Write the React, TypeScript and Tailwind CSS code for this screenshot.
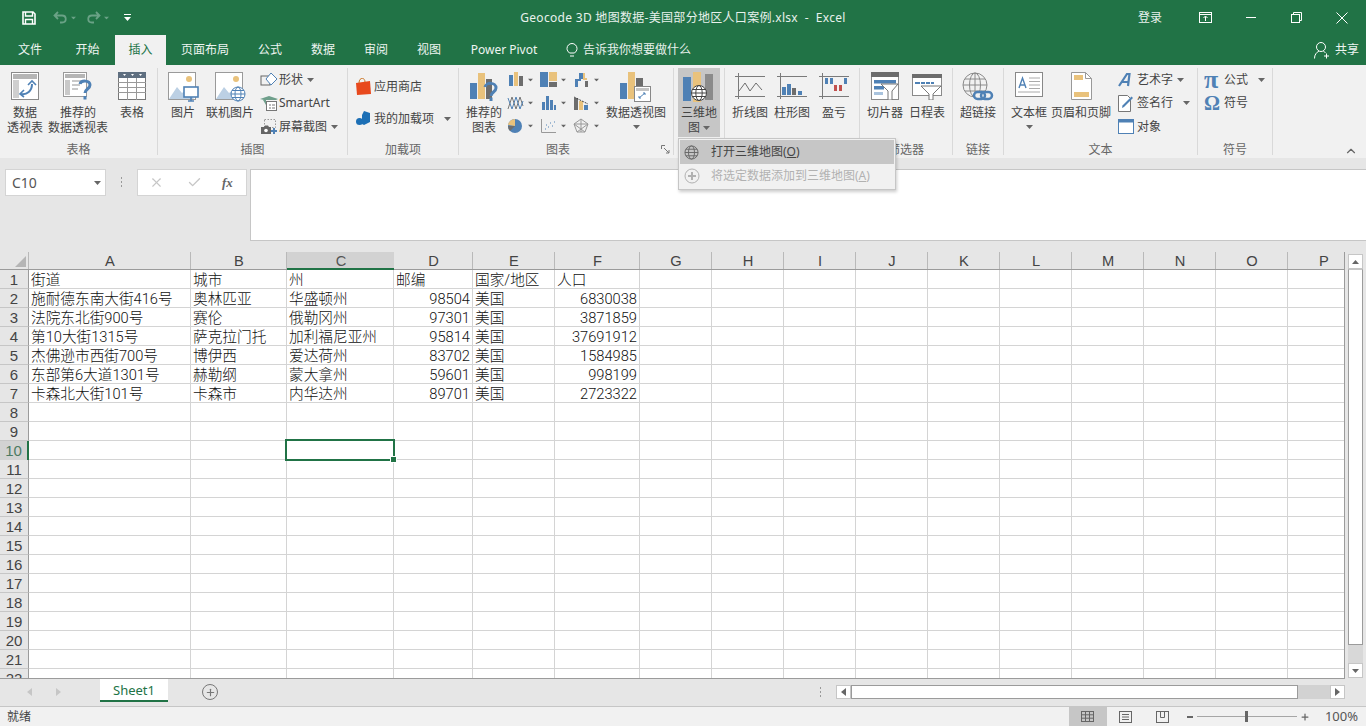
import React from 'react';
import { X, Check, Plus, ChevronUp } from 'lucide-react';

const BLUE = '#4f81b5';
const TAN = '#e9c27c';
const GRAY = '#6d6d6d';

const Caret = ({ className = '', color = '#666' }: { className?: string; color?: string }) => (
  <svg width="7" height="4" viewBox="0 0 7 4" className={className}>
    <path d="M0 0h7L3.5 4z" fill={color} />
  </svg>
);

const Globe = ({ size = 16, color = '#777', sw = 1 }: { size?: number; color?: string; sw?: number }) => (
  <svg width={size} height={size} viewBox="0 0 16 16" fill="none" stroke={color} strokeWidth={sw}>
    <circle cx="8" cy="8" r="7" />
    <ellipse cx="8" cy="8" rx="3.2" ry="7" />
    <path d="M1 8h14M2 4.5h12M2 11.5h12" />
  </svg>
);

const PivotIcon = () => (
  <svg width="28" height="28" viewBox="0 0 28 28" fill="none">
    <rect x=".5" y=".5" width="27" height="27" fill="#fff" stroke="#8a8a8a" />
    <rect x="2" y="2" width="24" height="5" fill="#b5b5b5" />
    <rect x="2" y="8" width="6" height="18" fill="#cfcfcf" />
    <path d="M10 22c6 1 11-3 11-10" stroke={BLUE} strokeWidth="2" />
    <path d="M17 13l4-4 4 4M13 18l-4 4 4 3" stroke={BLUE} strokeWidth="1.6" />
  </svg>
);

const RecPivotIcon = () => (
  <svg width="30" height="30" viewBox="0 0 30 30" fill="none">
    <rect x=".5" y=".5" width="23" height="24" fill="#fff" stroke="#9a9a9a" />
    <rect x="2" y="2" width="20" height="4" fill="#b5b5b5" />
    <path d="M2 8h5v15H2zM9 8h12v2H9zM9 12h8v2H9zM9 16h6v2H9z" fill="#c9c9c9" />
    <path d="M17 12c1-4 10-4 10 1 0 4-5 4-5 8" stroke={BLUE} strokeWidth="3" />
    <rect x="20.5" y="24" width="3" height="3.5" fill={BLUE} />
  </svg>
);

const TableIcon = () => (
  <svg width="28" height="28" viewBox="0 0 28 28" fill="none">
    <rect x=".5" y=".5" width="27" height="27" fill="#fff" stroke="#777" />
    <rect x="0" y="0" width="28" height="6" fill="#5f6f80" />
    <path d="M5 2h3L6.5 4zM13 2h3l-1.5 2zM21 2h3l-1.5 2z" fill="#fff" />
    <path d="M0 10.5h28M0 15.5h28M0 20.5h28M9.5 6v22M18.5 6v22" stroke="#999" />
  </svg>
);

const PictureBase = () => (
  <>
    <rect x=".5" y=".5" width="27" height="27" fill="#fff" stroke="#9a9a9a" />
    <circle cx="21" cy="7" r="3" fill={TAN} />
    <path d="M1 27l8-12 5 6 4-3 8 9z" fill="#bcd0e4" />
  </>
);

const PictureIcon = () => (
  <svg width="31" height="30" viewBox="0 0 31 30" fill="none">
    <PictureBase />
    <rect x="16" y="15" width="14" height="10" fill="#fff" stroke={BLUE} strokeWidth="1.6" />
    <path d="M20 29h6M23 25v4" stroke={BLUE} strokeWidth="1.6" />
  </svg>
);

const OnlinePictureIcon = () => (
  <svg width="31" height="30" viewBox="0 0 31 30" fill="none">
    <PictureBase />
    <circle cx="23" cy="22" r="7" fill="#fff" stroke={BLUE} />
    <ellipse cx="23" cy="22" rx="3" ry="7" stroke={BLUE} />
    <path d="M16 22h14M17 18.5h12M17 25.5h12" stroke={BLUE} />
  </svg>
);

const ShapesIcon = () => (
  <svg width="18" height="16" viewBox="0 0 18 16" fill="none">
    <rect x="1" y="4" width="9" height="9" stroke="#666" />
    <path d="M11 1l6 6-6 6-5-6z" fill="#fff" stroke={BLUE} />
  </svg>
);

const SmartArtIcon = () => (
  <svg width="18" height="17" viewBox="0 0 18 17" fill="none">
    <path d="M0 4l9-3 9 3-2 1H4z" fill="#6f9f8b" />
    <path d="M3 5l3 5V5z" fill="#6f9f8b" />
    <rect x="6.5" y="6.5" width="10" height="9" fill="#fff" stroke="#777" />
    <path d="M9 10h2M9 13h2M12 10h3M12 13h3" stroke="#777" />
  </svg>
);

const ScreenshotIcon = () => (
  <svg width="18" height="16" viewBox="0 0 18 16" fill="none">
    <rect x="4.5" y=".5" width="11" height="8" stroke="#999" strokeDasharray="1.5 1.5" />
    <path d="M1 8h3l1-1.5h3L9 8h2v7H1z" fill="#666" />
    <circle cx="6" cy="11.5" r="1.8" fill="#fff" />
    <path d="M14 9v6M11 12h6" stroke={BLUE} strokeWidth="2" />
  </svg>
);

const StoreIcon = () => (
  <svg width="15" height="17" viewBox="0 0 15 17">
    <path d="M0 5l14-2 1 13-14 1z" fill="#e8491d" />
    <path d="M3 5c0-6 6-6 6-1" stroke="#c9701d" fill="none" />
  </svg>
);

const AddinIcon = () => (
  <svg width="15" height="15" viewBox="0 0 15 15" fill="#1c6fb5">
    <circle cx="3.5" cy="10.5" r="3.5" />
    <path d="M8 0l6 2v9l-6 3-2-1V4z" />
  </svg>
);

const bar = (x: number, h: number, w: number, fill: string, base = 15) => (
  <rect key={`${x}-${h}`} x={x} y={base - h} width={w} height={h} fill={fill} />
);

const Mini = ({ children }: { children: React.ReactNode }) => (
  <svg width="17" height="16" viewBox="0 0 17 16" fill="none">
    {children}
  </svg>
);

const RecChartIcon = () => (
  <svg width="30" height="30" viewBox="0 0 30 30" fill="none">
    {bar(1, 16, 7, BLUE, 27)}
    {bar(9, 26, 7, TAN, 27)}
    {bar(17, 20, 6, GRAY, 27)}
    <path d="M16 15c1-5 11-5 11 1 0 4-5 4-5 8" stroke={BLUE} strokeWidth="3" />
    <rect x="20.5" y="25.5" width="3" height="3.5" fill={BLUE} />
  </svg>
);

const PivotChartIcon = () => (
  <svg width="33" height="30" viewBox="0 0 33 30" fill="none">
    {bar(0, 16, 7, BLUE, 27)}
    {bar(8, 27, 7, TAN, 27)}
    {bar(16, 21, 7, GRAY, 27)}
    <rect x="14.5" y="14.5" width="16" height="15" fill="#fff" stroke="#888" />
    <rect x="16" y="16" width="13" height="3" fill="#c4c4c4" />
    <path d="M19 26l6-5M23 21h2v2M21 26h-2v-2" stroke={BLUE} />
  </svg>
);

const Map3DIcon = () => (
  <svg width="32" height="31" viewBox="0 0 32 31" fill="none">
    {bar(0, 24, 8, BLUE, 29)}
    {bar(10, 30, 8, TAN, 30)}
    {bar(22, 26, 8, '#8b8b8b', 28)}
    <circle cx="16" cy="21" r="7.5" fill="#fff" stroke="#444" />
    <ellipse cx="16" cy="21" rx="3.2" ry="7.5" stroke="#444" />
    <path d="M8.5 21h15M10 17.5h12M10 24.5h12" stroke="#444" />
  </svg>
);

const SparkFrame = ({ children }: { children: React.ReactNode }) => (
  <svg width="30" height="28" viewBox="0 0 30 28" fill="none">
    <path d="M0 4.5h30M0 24.5h30M3.5 1v26" stroke="#7a7a7a" />
    {children}
  </svg>
);

const SlicerIcon = () => (
  <svg width="28" height="28" viewBox="0 0 28 28" fill="none">
    <rect x=".5" y=".5" width="27" height="27" fill="#fff" stroke="#8a8a8a" />
    <rect x="0" y="0" width="28" height="5" fill={GRAY} />
    <rect x="3" y="8" width="22" height="3.5" fill={BLUE} />
    <rect x="3" y="14" width="10" height="3.5" fill={BLUE} />
    <rect x="3" y="20" width="9" height="3" fill="#a9c3dd" />
    <path d="M10 12h17l-6 7v9h-4v-9z" fill="#fff" stroke="#777" />
  </svg>
);

const TimelineIcon = () => (
  <svg width="30" height="28" viewBox="0 0 30 28" fill="none">
    <rect x=".5" y="2.5" width="29" height="21" fill="#fff" stroke="#8a8a8a" />
    <rect x="0" y="2" width="30" height="4" fill={GRAY} />
    <path d="M3 11h5M9 11h4M14 11h4M19 11h3" stroke={BLUE} strokeWidth="2" />
    <path d="M9 14h20l-8 8v6h-4v-6z" fill="#fff" stroke="#777" />
  </svg>
);

const LinkIcon = () => (
  <svg width="32" height="32" viewBox="0 0 32 32" fill="none">
    <circle cx="13" cy="13" r="12" stroke="#8a8a8a" />
    <ellipse cx="13" cy="13" rx="5.5" ry="12" stroke="#8a8a8a" />
    <path d="M1 13h24M3 7h20M3 19h20M13 1v24" stroke="#8a8a8a" />
    <rect x="12" y="20" width="11" height="7" rx="3.5" stroke={BLUE} strokeWidth="2.5" fill="#f1f1f1" />
    <rect x="19" y="20" width="11" height="7" rx="3.5" stroke={BLUE} strokeWidth="2.5" />
  </svg>
);

const TextBoxIcon = () => (
  <svg width="28" height="26" viewBox="0 0 28 26" fill="none">
    <rect x=".5" y=".5" width="27" height="24" fill="#fff" stroke="#888" />
    <path d="M4 16l3.5-10L11 16M5 13h5" stroke={BLUE} strokeWidth="1.4" />
    <path d="M14 6h11M14 9.5h11M14 13h11M14 16.5h11M3 20h22" stroke="#aaa" />
  </svg>
);

const HeaderFooterIcon = () => (
  <svg width="21" height="28" viewBox="0 0 21 28" fill="none">
    <path d="M.5.5h14l6 6v21H.5z" fill="#fff" stroke="#999" />
    <path d="M14.5.5v6h6" stroke="#999" />
    <rect x="3" y="3" width="9" height="5" fill={TAN} />
    <rect x="3" y="20" width="15" height="5" fill={TAN} />
  </svg>
);

const WordArtIcon = () => (
  <svg width="14" height="14" viewBox="0 0 14 14" fill="none">
    <path d="M1 13L9 1h2.5L10 13M4 9h7" stroke={BLUE} strokeWidth="2.2" />
  </svg>
);

const SignatureIcon = () => (
  <svg width="16" height="17" viewBox="0 0 16 17" fill="none">
    <path d="M.5.5h9l3 3v13H.5z" fill="#fff" stroke="#777" />
    <path d="M4 13l2-1 9-9-1.5-1.5-9 9z" fill={BLUE} />
  </svg>
);

const ObjectIcon = () => (
  <svg width="16" height="15" viewBox="0 0 16 15" fill="none">
    <rect x=".5" y=".5" width="15" height="14" fill="#fff" stroke={BLUE} />
    <rect x="0" y="0" width="16" height="3.5" fill={BLUE} />
  </svg>
);

const SaveIcon = () => (
  <svg width="14" height="14" viewBox="0 0 14 14" fill="none">
    <path d="M1 1h10l2 2v10H1z" stroke="#fff" strokeWidth="1.6" />
    <path d="M3.5 1v4h7V1M3.5 13V8.5h7V13" stroke="#fff" strokeWidth="1.4" />
  </svg>
);

const UndoIcon = ({ flip = false }: { flip?: boolean }) => (
  <svg width="15" height="13" viewBox="0 0 15 13" fill="none" className={flip ? '-scale-x-100' : ''}>
    <path d="M5 1L1.5 4.5 5 8M2 4.5h7c5 0 5 7 0 7H7" stroke="#6aa286" strokeWidth="1.8" />
  </svg>
);

const Big = ({ w, ml = 0, icon, lines, caret, iconH = 'h-[32px]' }: { w: number; ml?: number; icon: React.ReactNode; lines: string[]; caret?: boolean; iconH?: string }) => (
  <div style={{ width: w, marginLeft: ml }} className="flex flex-col items-center shrink-0 pt-[4px] text-[12px] leading-[15px] text-[#444]">
    <div className={`${iconH} flex items-start justify-center`}>{icon}</div>
    <div className="mt-[1px] whitespace-nowrap">{lines[0]}</div>
    {lines[1] && <div className="whitespace-nowrap">{lines[1]}</div>}
    {caret && <Caret className="mt-[5px]" />}
  </div>
);

const Small = ({ icon, label, caret, iconW = 19, caretGap = 4 }: { icon: React.ReactNode; label: string; caret?: boolean; iconW?: number; caretGap?: number }) => (
  <div className="flex items-center h-[23.5px] text-[12px] text-[#444] whitespace-nowrap">
    <div style={{ width: iconW }} className="flex items-center shrink-0">{icon}</div>
    <span>{label}</span>
    {caret && <span style={{ marginLeft: caretGap }}><Caret className="block" /></span>}
  </div>
);

const Group = ({ w, label, labelClass = '', children }: { w: number; label?: string; labelClass?: string; children: React.ReactNode }) => (
  <div style={{ width: w }} className="h-[87px] shrink-0 flex flex-col border-r border-[#d9d9d9]">
    <div className="h-[73px] flex">{children}</div>
    <div className={`h-[14px] leading-[18px] text-center text-[12px] text-[#666] ${labelClass}`}>{label}</div>
  </div>
);

const ChartCell = ({ children }: { children: React.ReactNode }) => (
  <div className="flex items-center justify-start gap-[3px] h-[23px]">
    <Mini>{children}</Mini>
    <Caret className="scale-75" />
  </div>
);

const tabs: [string, number][] = [
  ['文件', 60],
  ['开始', 55],
  ['插入', 51],
  ['页面布局', 78],
  ['公式', 52],
  ['数据', 54],
  ['审阅', 52],
  ['视图', 54],
  ['Power Pivot', 96],
];

const cols = ['A', 'B', 'C', 'D', 'E', 'F', 'G', 'H', 'I', 'J', 'K', 'L', 'M', 'N', 'O', 'P'];
const colW = [162, 96, 107, 79, 82, 85, 72, 72, 72, 72, 72, 72, 72, 72, 72, 72];

const rows = [
  ['街道', '城市', '州', '邮编', '国家/地区', '人口'],
  ['施耐德东南大街416号', '奥林匹亚', '华盛顿州', '98504', '美国', '6830038'],
  ['法院东北街900号', '赛伦', '俄勒冈州', '97301', '美国', '3871859'],
  ['第10大街1315号', '萨克拉门托', '加利福尼亚州', '95814', '美国', '37691912'],
  ['杰佛逊市西街700号', '博伊西', '爱达荷州', '83702', '美国', '1584985'],
  ['东部第6大道1301号', '赫勒纲', '蒙大拿州', '59601', '美国', '998199'],
  ['卡森北大街101号', '卡森市', '内华达州', '89701', '美国', '2723322'],
];

const ScrollBtn = ({ children }: { children: React.ReactNode }) => (
  <div className="bg-white border border-[#c6c6c6] flex items-center justify-center shrink-0">{children}</div>
);

export default function App() {
  const rowNums = Array.from({ length: 22 }, (_, i) => i + 1);
  return (
    <div className="w-[1366px] h-[726px] overflow-hidden bg-[#e6e6e6] font-['Noto_Sans','Noto_Sans_CJK_SC',sans-serif] text-[12px]">
      {/* title bar */}
      <div className="h-[35px] bg-[#217346] flex items-center text-white relative">
        <div className="flex items-center w-[140px] shrink-0">
          <div className="ml-[22px] w-[14px]"><SaveIcon /></div>
          <div className="ml-[17px]"><UndoIcon /></div>
          <Caret className="ml-[2px] scale-75" color="#6aa286" />
          <div className="ml-[9px]"><UndoIcon flip /></div>
          <Caret className="ml-[2px] scale-75" color="#6aa286" />
          <svg width="7" height="7" viewBox="0 0 7 7" className="ml-[14px]"><path d="M0 0h7v1H0zM0 3h7L3.5 7z" fill="#fff" /></svg>
        </div>
        <div className="w-[997px] text-center text-[#e8f1ec] tracking-[0.3px] ml-[-1px] pl-[91px] whitespace-pre">Geocode 3D 地图数据-美国部分地区人口案例.xlsx  -  Excel</div>
        <div className="w-[40px] text-center text-[#e8f1ec] ml-[-6px]">登录</div>
        <div className="flex items-center">
          <svg width="13" height="11" viewBox="0 0 13 11" fill="none" stroke="#fff" className="ml-[29px]"><rect x=".5" y=".5" width="12" height="10" /><path d="M.5 2.5h12M6.5 9V4.5M4.5 6l2-2 2 2" /></svg>
          <svg width="12" height="11" viewBox="0 0 12 11" fill="none" stroke="#fff" className="ml-[33px]"><path d="M1 5.5h10" /></svg>
          <svg width="11" height="11" viewBox="0 0 11 11" fill="none" stroke="#fff" className="ml-[34px]"><rect x=".5" y="2.5" width="8" height="8" /><path d="M2.5 2.5v-2h8v8h-2" /></svg>
          <svg width="12" height="12" viewBox="0 0 12 12" fill="none" stroke="#fff" className="ml-[34px]"><path d="M.5.5l11 11M11.5.5l-11 11" /></svg>
        </div>
      </div>
      {/* tabs */}
      <div className="h-[30px] bg-[#217346] flex text-white">
        {tabs.map(([name, w]) => (
          <div key={name} style={{ width: w }} className={name === '插入' ? 'h-[30px] bg-[#f1f1f1] text-[#217346] flex items-center justify-center' : 'h-[30px] flex items-center justify-center text-[#eef5f1]'}>
            {name}
          </div>
        ))}
        <div className="flex items-center ml-[14px] text-[#e8f1ec]">
          <svg width="12" height="15" viewBox="0 0 12 15" fill="none" stroke="#fff" className="mr-[5px]"><path d="M3.5 10C2 8.5 1 7.5 1 5.5a5 5 0 0 1 10 0c0 2-1 3-2.5 4.5zM4 13h4" /></svg>
          告诉我你想要做什么
        </div>
        <div className="ml-auto flex items-center text-[#eef5f1] mr-[7px]">
          <svg width="15" height="17" viewBox="0 0 15 17" fill="none" stroke="#fff" className="mr-[6px]"><circle cx="7" cy="5" r="4.5" /><path d="M.5 16.5c0-4 2-6 4.5-7.5M9.5 9.5l2 1M10 14h5M12.5 11.5v5" /></svg>
          共享
        </div>
      </div>
      {/* ribbon */}
      <div className="h-[93px] bg-[#f1f1f1] pt-[3px] flex relative">
        <Group w={158} label="表格">
          <Big w={42} ml={4} icon={<PivotIcon />} lines={['数据', '透视表']} />
          <Big w={60} ml={2} icon={<RecPivotIcon />} lines={['推荐的', '数据透视表']} />
          <Big w={34} ml={7} icon={<TableIcon />} lines={['表格']} />
        </Group>
        <Group w={190} label="插图">
          <Big w={36} ml={7} icon={<PictureIcon />} lines={['图片']} />
          <Big w={48} ml={5} icon={<OnlinePictureIcon />} lines={['联机图片']} />
          <div className="ml-[6px]">
            <Small icon={<ShapesIcon />} label="形状" caret />
            <Small icon={<SmartArtIcon />} label="SmartArt" />
            <Small icon={<ScreenshotIcon />} label="屏幕截图" caret />
          </div>
        </Group>
        <Group w={111} label="加载项">
          <div className="ml-[8px] pt-[7px]">
            <div className="h-[24px]"><Small iconW={18} icon={<StoreIcon />} label="应用商店" /></div>
            <div className="h-[24px] mt-[8px]"><Small iconW={18} icon={<AddinIcon />} label="我的加载项" caret caretGap={10} /></div>
          </div>
        </Group>
        <div className="relative">
          <Group w={215} label="图表" labelClass="pr-[16px]">
            <Big w={38} ml={6} icon={<RecChartIcon />} lines={['推荐的', '图表']} />
            <div className="ml-[4px] grid grid-cols-[33px_33px_33px] content-start">
              <ChartCell>{bar(2, 11, 4, BLUE, 14)}{bar(7, 14, 4, TAN, 14)}{bar(12, 10, 4, GRAY, 14)}</ChartCell>
              <ChartCell><rect x="0" y="0" width="8" height="15" fill={BLUE} /><rect x="9" y="0" width="8" height="9" fill={TAN} /><rect x="9" y="10" width="8" height="5" fill={GRAY} /></ChartCell>
              <ChartCell><path d="M2 15V7h4V1h4v6H8v2H5v6z" fill={BLUE} /><path d="M10 1h2v5h2v2h-4z" fill={TAN} /><rect x="12" y="9" width="3" height="6" fill={GRAY} /></ChartCell>
              <ChartCell><path d="M1 14L5 2l4 12 4-12 3 9" stroke="#777" /><path d="M1 3l4 11 4-12 4 12 3-8" stroke={BLUE} /></ChartCell>
              <ChartCell>{bar(2, 8, 3, BLUE)}{bar(6, 14, 3, BLUE)}{bar(10, 10, 3, BLUE)}{bar(14, 5, 2, BLUE)}</ChartCell>
              <ChartCell>{bar(1, 12, 4, GRAY)}{bar(6, 9, 4, TAN)}{bar(11, 5, 4, BLUE)}<path d="M1 2l14 7" stroke="#444" strokeDasharray="2 1" /></ChartCell>
              <ChartCell><circle cx="8" cy="8" r="7" fill={BLUE} /><path d="M8 8V1a7 7 0 0 0-7 6z" fill={TAN} /><path d="M8 8H1a7 7 0 0 0 2 5z" fill={GRAY} /></ChartCell>
              <ChartCell><path d="M1.5 1v13.5H16" stroke="#999" /><path d="M5 11h1M8 9h1M10 5h1M12 8h1M14 4h1M6 7h1" stroke={BLUE} /></ChartCell>
              <ChartCell><path d="M8 1l7 5-3 8H4L1 6zM8 1v13M1 6l14 0M4 14l11-8M12 14L1 6" stroke="#999" /></ChartCell>
            </div>
            <Big w={60} icon={<PivotChartIcon />} lines={['数据透视图']} caret />
          </Group>
          <svg width="9" height="9" viewBox="0 0 9 9" fill="none" stroke="#777" className="absolute left-[202px] top-[77px]"><path d="M.5 4V.5H4M3 3l5 5M8 5v3H5" /></svg>
        </div>
        <Group w={51}>
          <div className="ml-[4px] w-[42px] h-[69px] bg-[#c6c6c6] flex flex-col items-center pt-[4px] text-[12px] leading-[15px] text-[#444]">
            <div className="h-[32px]"><Map3DIcon /></div>
            <div className="mt-[1px]">三维地</div>
            <div className="flex items-center gap-[3px]">图<Caret /></div>
          </div>
        </Group>
        <Group w={135}>
          <Big w={42} ml={4} icon={<SparkFrame><path d="M4 19l6-8 5 8 6-8 6 7" stroke="#6d6d6d" /></SparkFrame>} lines={['折线图']} />
          <Big w={42} icon={<SparkFrame>{bar(5, 8, 4, BLUE, 23)}{bar(10, 11, 4, BLUE, 23)}{bar(15, 7, 4, GRAY, 23)}{bar(21, 4, 4, BLUE, 23)}</SparkFrame>} lines={['柱形图']} />
          <Big w={42} icon={<SparkFrame><rect x="6" y="6" width="3" height="6" fill={BLUE} /><rect x="11" y="6" width="3" height="6" fill={BLUE} /><rect x="15" y="13" width="3" height="6" fill="#c0504d" /><rect x="20" y="13" width="3" height="6" fill="#c0504d" /><rect x="25" y="6" width="3" height="6" fill={BLUE} /></SparkFrame>} lines={['盈亏']} />
        </Group>
        <Group w={93} label="筛选器">
          <Big w={42} ml={4} icon={<SlicerIcon />} lines={['切片器']} />
          <Big w={42} icon={<TimelineIcon />} lines={['日程表']} />
        </Group>
        <Group w={51} label="链接">
          <Big w={42} ml={4} icon={<LinkIcon />} lines={['超链接']} />
        </Group>
        <Group w={194} label="文本">
          <Big w={42} ml={4} icon={<TextBoxIcon />} lines={['文本框']} caret />
          <Big w={60} ml={1} icon={<HeaderFooterIcon />} lines={['页眉和页脚']} />
          <div className="ml-[7px]">
            <Small iconW={19} icon={<WordArtIcon />} label="艺术字" caret />
            <Small iconW={19} icon={<SignatureIcon />} label="签名行" caret caretGap={10} />
            <Small iconW={19} icon={<ObjectIcon />} label="对象" />
          </div>
        </Group>
        <Group w={75} label="符号">
          <div className="ml-[6px]">
            <Small iconW={20} icon={<span className="font-['Liberation_Serif',serif] text-[26px] font-bold leading-[20px] text-[#4f81b5]">π</span>} label="公式" caret caretGap={10} />
            <Small iconW={20} icon={<span className="font-['Liberation_Serif',serif] text-[20px] font-bold leading-[20px] text-[#4f81b5]">Ω</span>} label="符号" />
          </div>
        </Group>
        <ChevronUp size={14} strokeWidth={2} className="absolute left-[1344px] top-[79px] text-[#666]" />
        {/* 3D map dropdown */}
        <div className="absolute left-[678px] top-[73px] w-[218px] h-[52px] bg-[#f1f1f1] border border-[#c6c6c6] shadow-[1px_2px_3px_rgba(0,0,0,0.2)] p-[1px] z-10 text-[12px]">
          <div className="h-[24px] bg-[#c6c6c6] flex items-center text-[#444]">
            <div className="ml-[4px] w-[27px]"><Globe size={15} color="#666" /></div>
            <span>打开三维地图(<span className="underline">O</span>)</span>
          </div>
          <div className="h-[24px] flex items-center text-[#b1b1b1]">
            <div className="ml-[4px] w-[27px]">
              <svg width="16" height="16" viewBox="0 0 16 16" fill="none" stroke="#b1b1b1"><circle cx="8" cy="8" r="7" /><path d="M8 4v8M4 8h8" strokeWidth="2" /></svg>
            </div>
            <span>将选定数据添加到三维地图(<span className="underline">A</span>)</span>
          </div>
        </div>
      </div>
      {/* formula bar */}
      <div className="h-[94px] pt-[11px] flex items-start">
        <div className="ml-[5px] w-[101px] h-[27px] bg-white border border-[#d4d4d4] flex items-center justify-between pl-[6px] pr-[4px] text-[14px] text-[#555]">
          C10
          <Caret />
        </div>
        <div className="w-[31px] h-[27px] flex items-center justify-center text-[#999] text-[13px]">
          <svg width="3" height="11" viewBox="0 0 3 11" fill="#999"><rect x="1" y="0" width="1" height="2" /><rect x="1" y="4" width="1" height="2" /><rect x="1" y="8" width="1" height="2" /></svg>
        </div>
        <div className="w-[110px] h-[27px] bg-white border border-[#d4d4d4] flex items-center">
          <X size={15} strokeWidth={1.8} className="ml-[11px] text-[#c6c6c6]" />
          <Check size={15} strokeWidth={2.2} className="ml-[23px] text-[#c6c6c6]" />
          <span className="ml-[20px] font-['Liberation_Serif',serif] italic font-bold text-[13px] text-[#666]">fx</span>
        </div>
        <div className="ml-[3px] w-[1116px] h-[72px] bg-white border border-[#c6c6c6] border-r-0" />
      </div>
      {/* sheet */}
      <div className="h-[427px] flex">
        <div className="w-[1345px] border-r border-b border-[#9b9b9b] flex flex-col relative overflow-hidden font-['Liberation_Sans','Noto_Sans_CJK_SC',sans-serif] text-[14.67px]">
          <div className="h-[18px] flex shrink-0 border-b border-[#9b9b9b] text-[#444] leading-[18px]">
            <div className="w-[29px] shrink-0 border-r border-[#b9b9b9] flex items-end justify-end pr-[2px] pb-[2px]">
              <svg width="11" height="11" viewBox="0 0 11 11"><path d="M11 0v11H0z" fill="#b5b5b5" /></svg>
            </div>
            {cols.map((c, i) => (
              <div key={c} style={{ width: colW[i] }} className={c === 'C' ? 'text-center pl-[1px] bg-[#d2d2d2] text-[#555] border-b-2 border-[#217346] h-[18px] shrink-0' : 'text-center pl-[1px] border-r border-[#b9b9b9] shrink-0'}>{c}</div>
            ))}
          </div>
          <div className="overflow-hidden">
            {rowNums.map((n) => (
              <div key={n} className="h-[19px] flex leading-[20px]">
                <div className={n === 10 ? 'w-[29px] shrink-0 text-center bg-[#d2d2d2] text-[#4d7a63] border-r-2 border-[#217346] text-[15px]' : 'w-[29px] shrink-0 text-center bg-[#e6e6e6] text-[#444] border-r border-[#9b9b9b] border-b border-b-[#c6c6c6] text-[15px]'}>{n}</div>
                {cols.map((c, i) => {
                  const v = rows[n - 1]?.[i];
                  const right = (i === 3 || i === 5) && n > 1;
                  const sel = n === 10 && c === 'C';
                  return (
                    <div key={c} style={{ width: colW[i] }} className={`shrink-0 bg-white border-r border-b border-[#d4d4d4] relative whitespace-nowrap px-[2px] font-['Roboto','Noto_Sans_CJK_SC',sans-serif] font-light text-[#111] ${right ? 'text-right' : ''}`}>
                      {v}
                      {sel && (
                        <div className="absolute -left-[2px] -top-[2px] -right-[2px] bottom-[-2px] border-2 border-[#217346] z-10">
                          <div className="absolute -right-[4px] -bottom-[4px] w-[5px] h-[5px] bg-[#217346] border border-white box-content" />
                        </div>
                      )}
                    </div>
                  );
                })}
              </div>
            ))}
          </div>
        </div>
        {/* vertical scrollbar */}
        <div className="w-[21px] pl-[3px] pr-[3px] pt-[2px] flex flex-col h-[426px]">
          <ScrollBtn><div className="h-[13px] flex items-center"><Caret className="rotate-180" /></div></ScrollBtn>
          <div className="h-[376px] bg-white border border-[#9b9b9b] border-t-[#c6c6c6] shrink-0" />
          <div className="flex-1 bg-[#d8d8d8]" />
          <ScrollBtn><div className="h-[13px] flex items-center"><Caret /></div></ScrollBtn>
        </div>
      </div>
      {/* sheet tabs */}
      <div className="h-[27px] flex items-start">
        <div className="w-[100px] h-[26px] flex items-center text-[#bdbdbd] pl-[27px] gap-[24px] shrink-0">
          <svg width="5" height="8" viewBox="0 0 5 8"><path d="M5 0v8L0 4z" fill="#c6c6c6" /></svg>
          <svg width="5" height="8" viewBox="0 0 5 8"><path d="M0 0v8l5-4z" fill="#c6c6c6" /></svg>
        </div>
        <div className="w-[68px] h-[23px] bg-white border-b-2 border-[#217346] flex items-center justify-center pt-[3px] text-[#217346] text-[13px] shrink-0">Sheet1</div>
        <div className="ml-[34px] mt-[5px] w-[16px] h-[16px] rounded-full border border-[#777] flex items-center justify-center shrink-0">
          <Plus size={11} strokeWidth={2.5} className="text-[#777]" />
        </div>
        <svg width="3" height="11" viewBox="0 0 3 11" fill="#999" className="ml-[601px] mt-[8px] shrink-0"><rect x="1" y="0" width="1" height="2" /><rect x="1" y="4" width="1" height="2" /><rect x="1" y="8" width="1" height="2" /></svg>
        <div className="ml-[14px] mt-[6px] w-[509px] h-[14px] flex bg-[#d2d2d2] shrink-0">
          <div className="w-[15px] bg-white border border-[#c6c6c6] flex items-center justify-center">
            <svg width="5" height="8" viewBox="0 0 5 8"><path d="M5 0v8L0 4z" fill="#666" /></svg>
          </div>
          <div className="w-[447px] bg-white border border-[#9b9b9b]" />
          <div className="ml-auto w-[15px] bg-white border border-[#c6c6c6] flex items-center justify-center">
            <svg width="5" height="8" viewBox="0 0 5 8"><path d="M0 0v8l5-4z" fill="#666" /></svg>
          </div>
        </div>
      </div>
      {/* status bar */}
      <div className="h-[20px] bg-[#f1f1f1] border-t border-[#c6c6c6] flex items-center text-[#444]">
        <span className="ml-[7px]">就绪</span>
        <div className="ml-auto w-[38px] h-[19px] bg-[#c6c6c6] flex items-center justify-center">
          <svg width="13" height="11" viewBox="0 0 13 11" fill="none" stroke="#666"><rect x=".5" y=".5" width="12" height="10" /><path d="M4.5 0v11M8.5 0v11M0 3.8h13M0 7.2h13" /></svg>
        </div>
        <svg width="13" height="12" viewBox="0 0 13 12" fill="none" stroke="#666" className="ml-[12px]"><rect x=".5" y=".5" width="12" height="11" /><path d="M3 3.5h7M3 6h7M3 8.500h7" /></svg>
        <svg width="13" height="12" viewBox="0 0 13 12" fill="none" stroke="#666" className="ml-[24px]"><rect x=".5" y=".5" width="12" height="11" /><path d="M4.5 1v5.5h4V1" /></svg>
        <div className="ml-[18px] w-[6px] h-[2px] bg-[#666]" />
        <div className="ml-[4px] w-[100px] h-[1px] bg-[#a6a6a6] relative">
          <div className="absolute left-[48px] -top-[5px] w-[3px] h-[11px] bg-[#666]" />
        </div>
        <Plus size={10} strokeWidth={3} className="ml-[3px] text-[#666]" />
        <span className="ml-[15px] mr-[8px] text-[13px] text-[#555]">100%</span>
      </div>
    </div>
  );
}
